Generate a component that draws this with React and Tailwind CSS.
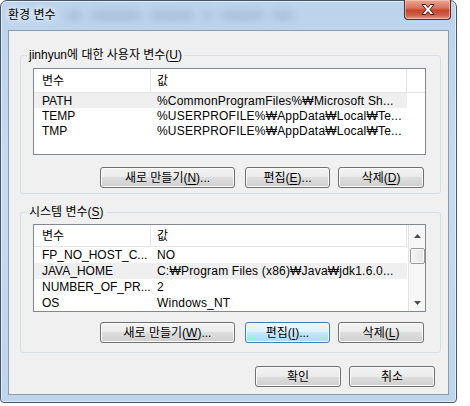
import React from "react";

const FONT = '"Liberation Sans","Noto Sans CJK KR",sans-serif';

function Btn({ children, className, def }) {
  return (
    <div
      className={
        "h-[21px] flex items-center justify-center rounded-[3px] border text-[12px] leading-[14px] text-black " +
        (def
          ? "border-[#3c7fb1] bg-[linear-gradient(180deg,#ecf7fd_0%,#dcf1fc_50%,#c3e7fb_50%,#acdaf4_100%)] shadow-[inset_0_0_0_1px_#f4fbff] "
          : "border-[#707070] bg-[linear-gradient(180deg,#f3f3f3_0%,#ebebeb_50%,#dddddd_50%,#d0d0d0_100%)] shadow-[inset_0_0_0_1px_#fbfbfb] ") +
        className
      }
    >
      {children}
    </div>
  );
}

function Row({ name, value, sel, h }) {
  return (
    <div className={"flex w-[373px] text-[12px] leading-[14px] text-black items-center " + h + (sel ? " bg-[#efefef]" : "")}>
      <div className="w-[117px] pl-[8px] whitespace-nowrap overflow-hidden">{name}</div>
      <div className="w-[256px] pl-[6px] whitespace-nowrap overflow-hidden tracking-[0.2px]">{value}</div>
    </div>
  );
}

function Header() {
  return (
    <div className="flex h-[24px] border-b border-[#e5e5e5] text-[12px] leading-[14px] text-black bg-white">
      <div className="w-[117px] border-r border-[#e5e5e5] pl-[8px] flex items-center">변수</div>
      <div className="w-[256px] border-r border-[#e5e5e5] pl-[6px] flex items-center">값</div>
    </div>
  );
}

function Arrow({ up }) {
  return (
    <svg width="7" height="4" viewBox="0 0 7 4">
      {up ? <path d="M3.5 0 L7 4 L0 4 Z" fill="#4d4d4d" /> : <path d="M0 0 L7 0 L3.5 4 Z" fill="#4d4d4d" />}
    </svg>
  );
}

export default function App() {
  return (
    <div className="w-[470px] h-[406px] bg-white" style={{ fontFamily: FONT }}>
      <div className="w-[457px] h-[403px] flex flex-col rounded-t-[7px] rounded-b-[4px] border border-[#44566d] bg-[linear-gradient(180deg,#bcd3ec_0%,#c7dbf0_45%,#bfd5ec_100%)] shadow-[inset_0_0_0_1px_rgba(255,255,255,0.55)]">
        {/* title bar */}
        <div className="h-[29px] flex items-start">
          <div className="pl-[7px] pt-[7px] text-[12px] leading-[15px] text-black whitespace-nowrap [text-shadow:0_0_6px_#ffffff,0_0_10px_#ffffff]">
            환경 변수
          </div>
          <div className="flex items-center gap-[8px] ml-[10px] mt-[10px] opacity-45">
            <div className="h-[9px] w-[16px] rounded-full bg-[#8ea5c2] blur-[4px]" />
            <div className="h-[9px] w-[52px] rounded-full bg-[#8ea5c2] blur-[4px]" />
            <div className="h-[9px] w-[44px] rounded-full bg-[#8ea5c2] blur-[4px]" />
            <div className="h-[9px] w-[10px] rounded-full bg-[#8ea5c2] blur-[4px]" />
            <div className="h-[9px] w-[44px] rounded-full bg-[#8ea5c2] blur-[4px]" />
            <div className="h-[9px] w-[22px] rounded-full bg-[#8ea5c2] blur-[4px]" />
          </div>
          <div className="ml-auto mr-[5px] -mt-[1px] w-[47px] h-[20px] rounded-b-[4px] border border-t-0 border-[#5e2a22] bg-[linear-gradient(180deg,#e8a592_0%,#d9775f_40%,#c8442d_55%,#d0604a_80%,#e89a7d_100%)] shadow-[inset_0_0_0_1px_rgba(255,220,210,0.5)] flex items-center justify-center">
            <svg width="14" height="11" viewBox="0 0 14 11">
              <path
                d="M1 0.5 L4.5 0.5 L7 3.5 L9.5 0.5 L13 0.5 L9 5.5 L13 10.5 L9.5 10.5 L7 7.5 L4.5 10.5 L1 10.5 L5 5.5 Z"
                fill="#ffffff"
                stroke="#4a1a12"
                strokeWidth="1"
                strokeLinejoin="round"
              />
            </svg>
          </div>
        </div>

        {/* client */}
        <div className="mx-[7px] h-[365px] border border-[#8b9cb2] bg-[#f0f0f0] flex flex-col">
          {/* user variables */}
          <fieldset className="ml-[11px] w-[421px] mt-[17px] border border-[#d5dfe5] rounded-[3px] pb-[5px]">
            <legend className="ml-[6px] px-[2px] text-[12px] leading-[14px] text-black">
              jinhyun에 대한 사용자 변수(<u className="underline-offset-2">U</u>)
            </legend>
            <div className="mt-[6px] ml-[12px] w-[393px] h-[87px] border border-[#828790] bg-white overflow-hidden">
              <Header />
              <Row h="h-[15px]" sel name="PATH" value="%CommonProgramFiles%₩Microsoft Sh..." />
              <Row h="h-[15px]" name="TEMP" value="%USERPROFILE%₩AppData₩Local₩Te..." />
              <Row h="h-[15px]" name="TMP" value="%USERPROFILE%₩AppData₩Local₩Te..." />
            </div>
            <div className="mt-[12px] flex justify-end pr-[16px]">
              <Btn className="w-[135px]">
                새로 만들기(<u className="underline-offset-2">N</u>)...
              </Btn>
              <Btn className="w-[85px] ml-[10px]">
                편집(<u className="underline-offset-2">E</u>)...
              </Btn>
              <Btn className="w-[86px] ml-[8px]">
                삭제(<u className="underline-offset-2">D</u>)
              </Btn>
            </div>
          </fieldset>

          {/* system variables */}
          <fieldset className="ml-[11px] w-[421px] mt-[11px] border border-[#d5dfe5] rounded-[3px] pb-[9px]">
            <legend className="ml-[6px] px-[2px] text-[12px] leading-[14px] text-black">
              시스템 변수(<u className="underline-offset-2">S</u>)
            </legend>
            <div className="mt-[5px] ml-[12px] w-[393px] h-[88px] border border-[#828790] bg-white overflow-hidden flex">
              <div className="w-[373px] flex flex-col overflow-hidden">
                <Header />
                <Row h="h-[16px] shrink-0" name="FP_NO_HOST_C..." value="NO" />
                <Row h="h-[16px] shrink-0" sel name="JAVA_HOME" value="C:₩Program Files (x86)₩Java₩jdk1.6.0..." />
                <Row h="h-[16px] shrink-0" name="NUMBER_OF_PR..." value="2" />
                <Row h="h-[16px] shrink-0" name="OS" value="Windows_NT" />
              </div>
              <div className="ml-auto w-[17px] h-full border-l border-[#e3e3e3] bg-[#f7f7f7] flex flex-col items-center">
                <div className="h-[17px] w-full flex items-center justify-center pt-[4px]">
                  <Arrow up />
                </div>
                <div className="mt-[6px] w-[15px] h-[16px] rounded-[2px] border border-[#9a9a9a] bg-[linear-gradient(90deg,#f4f4f4_0%,#e4e4e4_100%)] shadow-[inset_0_0_0_1px_#fafafa]" />
                <div className="mt-auto h-[17px] w-full flex items-center justify-center">
                  <Arrow />
                </div>
              </div>
            </div>
            <div className="mt-[10px] flex justify-end pr-[16px]">
              <Btn className="w-[135px]">
                새로 만들기(<u className="underline-offset-2">W</u>)...
              </Btn>
              <Btn def className="w-[85px] ml-[10px]">
                편집(<u className="underline-offset-2">I</u>)...
              </Btn>
              <Btn className="w-[86px] ml-[8px]">
                삭제(<u className="underline-offset-2">L</u>)
              </Btn>
            </div>
          </fieldset>

          <div className="mt-[13px] flex justify-end pr-[13px]">
            <Btn className="w-[86px]">확인</Btn>
            <Btn className="w-[86px] ml-[8px]">취소</Btn>
          </div>
        </div>
      </div>
    </div>
  );
}
